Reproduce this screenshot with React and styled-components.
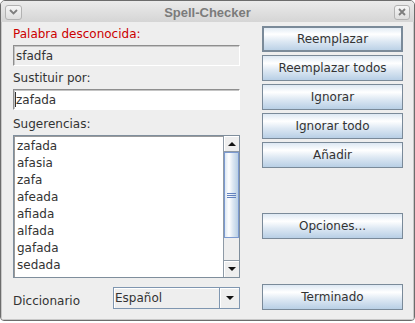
import React from 'react';
import styled, { createGlobalStyle, css } from 'styled-components';

const Global = createGlobalStyle`
  html, body { margin: 0; padding: 0; background: #ffffff; }
  body { font-family: "DejaVu Sans", Verdana, sans-serif; font-size: 12px; color: #333333; }
  * { box-sizing: border-box; }
`;

const Window = styled.div`
  width: 415px;
  height: 321px;
  border: 1px solid #6c6c6c;
  border-radius: 5px 5px 4px 4px;
  background: #eeeeee;
  display: flex;
  flex-direction: column;
  overflow: hidden;
`;

const TitleBar = styled.div`
  height: 21px;
  flex: none;
  display: grid;
  grid-template-columns: 1fr auto 1fr;
  align-items: center;
  padding: 0 4px;
  background: linear-gradient(#ebebeb, #d5d5d5);
`;

const Title = styled.div`
  font-family: "Liberation Sans", Arial, sans-serif;
  font-weight: bold;
  font-size: 13px;
  color: #7b7b7b;
  line-height: 21px;
  padding-top: 1px;
`;

const TitleButton = styled.div`
  width: ${(p) => p.$w}px;
  height: 15px;
  justify-self: ${(p) => p.$side};
  border: 1px solid #b2b2b2;
  border-radius: 3px;
  background: linear-gradient(#f6f6f6, #dedede);
  display: flex;
  align-items: center;
  justify-content: center;
`;

const Body = styled.div`
  flex: 1;
  display: grid;
  grid-template-columns: 227px 141px;
  column-gap: 22px;
  row-gap: 6px;
  align-content: start;
  padding: 4px 10px 0 11px;
  border: solid #c8c8c8;
  border-width: 0 1px 1px 1px;
`;

const Stack = styled.div`
  display: flex;
  flex-direction: column;
`;

const Label = styled.div`
  height: 16px;
  line-height: 16px;
  margin-top: ${(p) => p.$mt || 0}px;
  color: ${(p) => (p.$error ? '#cc0000' : '#333333')};
  white-space: nowrap;
`;

const Field = styled.div`
  height: 21px;
  margin-top: 3px;
  border: 1px solid;
  border-color: #8e8e8e #ffffff #ffffff #8e8e8e;
  box-shadow: inset 1px 1px 0 #c4c4c4;
  background: ${(p) => (p.$editable ? '#ffffff' : '#eeeeee')};
  display: flex;
  align-items: center;
  padding-left: 2px;
  line-height: 16px;
  position: relative;
`;

const Caret = styled.span`
  position: absolute;
  left: 1px;
  top: 2px;
  width: 1px;
  height: 15px;
  background: #333333;
`;

const ListBox = styled.div`
  height: 143px;
  margin-top: 3px;
  border: 1px solid #7f8e9c;
  display: flex;
  background: #ffffff;
`;

const Viewport = styled.div`
  flex: 1;
  border-top: 1px solid #9a9a9a;
  border-left: 1px solid #9a9a9a;
  padding-top: 1px;
  overflow: hidden;
`;

const Item = styled.div`
  height: 17px;
  line-height: 17px;
  padding-left: 2px;
  color: #333333;
`;

const ScrollBar = styled.div`
  width: 16px;
  display: flex;
  flex-direction: column;
  border-left: 1px solid #8e9aa6;
  background: #eeeeee;
`;

const Arrow = styled.div`
  height: ${(p) => p.$h}px;
  flex: none;
  background: #eeeeee;
  border-${(p) => (p.$up ? 'bottom' : 'top')}: 1px solid #8e9aa6;
  box-shadow: inset 1px 1px 0 #ffffff;
  display: flex;
  align-items: center;
  justify-content: center;
`;

const Triangle = styled.span`
  width: 0;
  height: 0;
  border-left: 4px solid transparent;
  border-right: 4px solid transparent;
  ${(p) =>
    p.$up
      ? css`border-bottom: 4px solid #111111;`
      : css`border-top: 4px solid #111111;`}
`;

const Thumb = styled.div`
  height: 86px;
  flex: none;
  border: 1px solid #7c9ad0;
  background: linear-gradient(90deg, #dde8f3 0%, #ffffff 30%, #dde8f3 60%, #b8cfe5 100%);
  display: flex;
  flex-direction: column;
  align-items: center;
  justify-content: center;
  gap: 1px;
`;

const Grip = styled.span`
  width: 9px;
  height: 1px;
  background: #6382bf;
`;

const Track = styled.div`
  flex: 1;
  background: #eeeeee;
`;

const Button = styled.div`
  height: 26px;
  margin-top: ${(p) => p.$mt ?? 3}px;
  border: 1px solid #7a8a99;
  ${(p) => p.$default && css`box-shadow: inset 0 0 0 1px #7a8a99;`}
  background: linear-gradient(#dde8f3 0%, #ffffff 30%, #dde8f3 60%, #b8cfe5 100%);
  display: flex;
  align-items: center;
  justify-content: center;
  color: #333333;
  white-space: nowrap;
`;

const BottomLeft = styled.div`
  display: flex;
  align-items: flex-start;
`;

const DictLabel = styled.div`
  line-height: 16px;
  margin-top: 9px;
`;

const Combo = styled.div`
  margin-left: auto;
  margin-top: 3px;
  width: 127px;
  height: 22px;
  border: 1px solid #7f96b0;
  display: flex;
`;

const ComboText = styled.div`
  flex: 1;
  background: #eeeeee;
  box-shadow: inset 1px 1px 0 #ffffff;
  display: flex;
  align-items: center;
  padding-left: 1px;
  line-height: 16px;
`;

const ComboArrow = styled.div`
  width: 20px;
  border-left: 1px solid #7f96b0;
  background: #eeeeee;
  box-shadow: inset 1px 1px 0 #ffffff;
  display: flex;
  align-items: center;
  justify-content: center;
`;

const suggestions = ['zafada', 'afasia', 'zafa', 'afeada', 'afiada', 'alfada', 'gafada', 'sedada'];

export default function App() {
  return (
    <>
      <Global />
      <Window>
        <TitleBar>
          <TitleButton $w={17} $side="start">
            <svg width="9" height="6" viewBox="0 0 9 6">
              <path d="M1 1 L4.5 4.5 L8 1" fill="none" stroke="#7e7e7e" strokeWidth="1.8" />
            </svg>
          </TitleButton>
          <Title>Spell-Checker</Title>
          <TitleButton $w={16} $side="end">
            <svg width="8" height="8" viewBox="0 0 8 8">
              <path d="M1 1 L7 7 M7 1 L1 7" fill="none" stroke="#7e7e7e" strokeWidth="1.9" />
            </svg>
          </TitleButton>
        </TitleBar>
        <Body>
          <Stack>
            <Label $error>Palabra desconocida:</Label>
            <Field>sfadfa</Field>
            <Label $mt={4}>Sustituir por:</Label>
            <Field $editable>
              <Caret />
              zafada
            </Field>
            <Label $mt={6}>Sugerencias:</Label>
            <ListBox>
              <Viewport>
                {suggestions.map((s) => (
                  <Item key={s}>{s}</Item>
                ))}
              </Viewport>
              <ScrollBar>
                <Arrow $up $h={16}>
                  <Triangle $up />
                </Arrow>
                <Thumb>
                  <Grip />
                  <Grip />
                  <Grip />
                </Thumb>
                <Track />
                <Arrow $h={17}>
                  <Triangle />
                </Arrow>
              </ScrollBar>
            </ListBox>
          </Stack>
          <Stack>
            <Button $default $mt={0}>Reemplazar</Button>
            <Button>Reemplazar todos</Button>
            <Button>Ignorar</Button>
            <Button>Ignorar todo</Button>
            <Button>Añadir</Button>
            <Button $mt={45}>Opciones...</Button>
          </Stack>
          <BottomLeft>
            <DictLabel>Diccionario</DictLabel>
            <Combo>
              <ComboText>Español</ComboText>
              <ComboArrow>
                <Triangle />
              </ComboArrow>
            </Combo>
          </BottomLeft>
          <Stack>
            <Button $mt={0}>Terminado</Button>
          </Stack>
        </Body>
      </Window>
    </>
  );
}
